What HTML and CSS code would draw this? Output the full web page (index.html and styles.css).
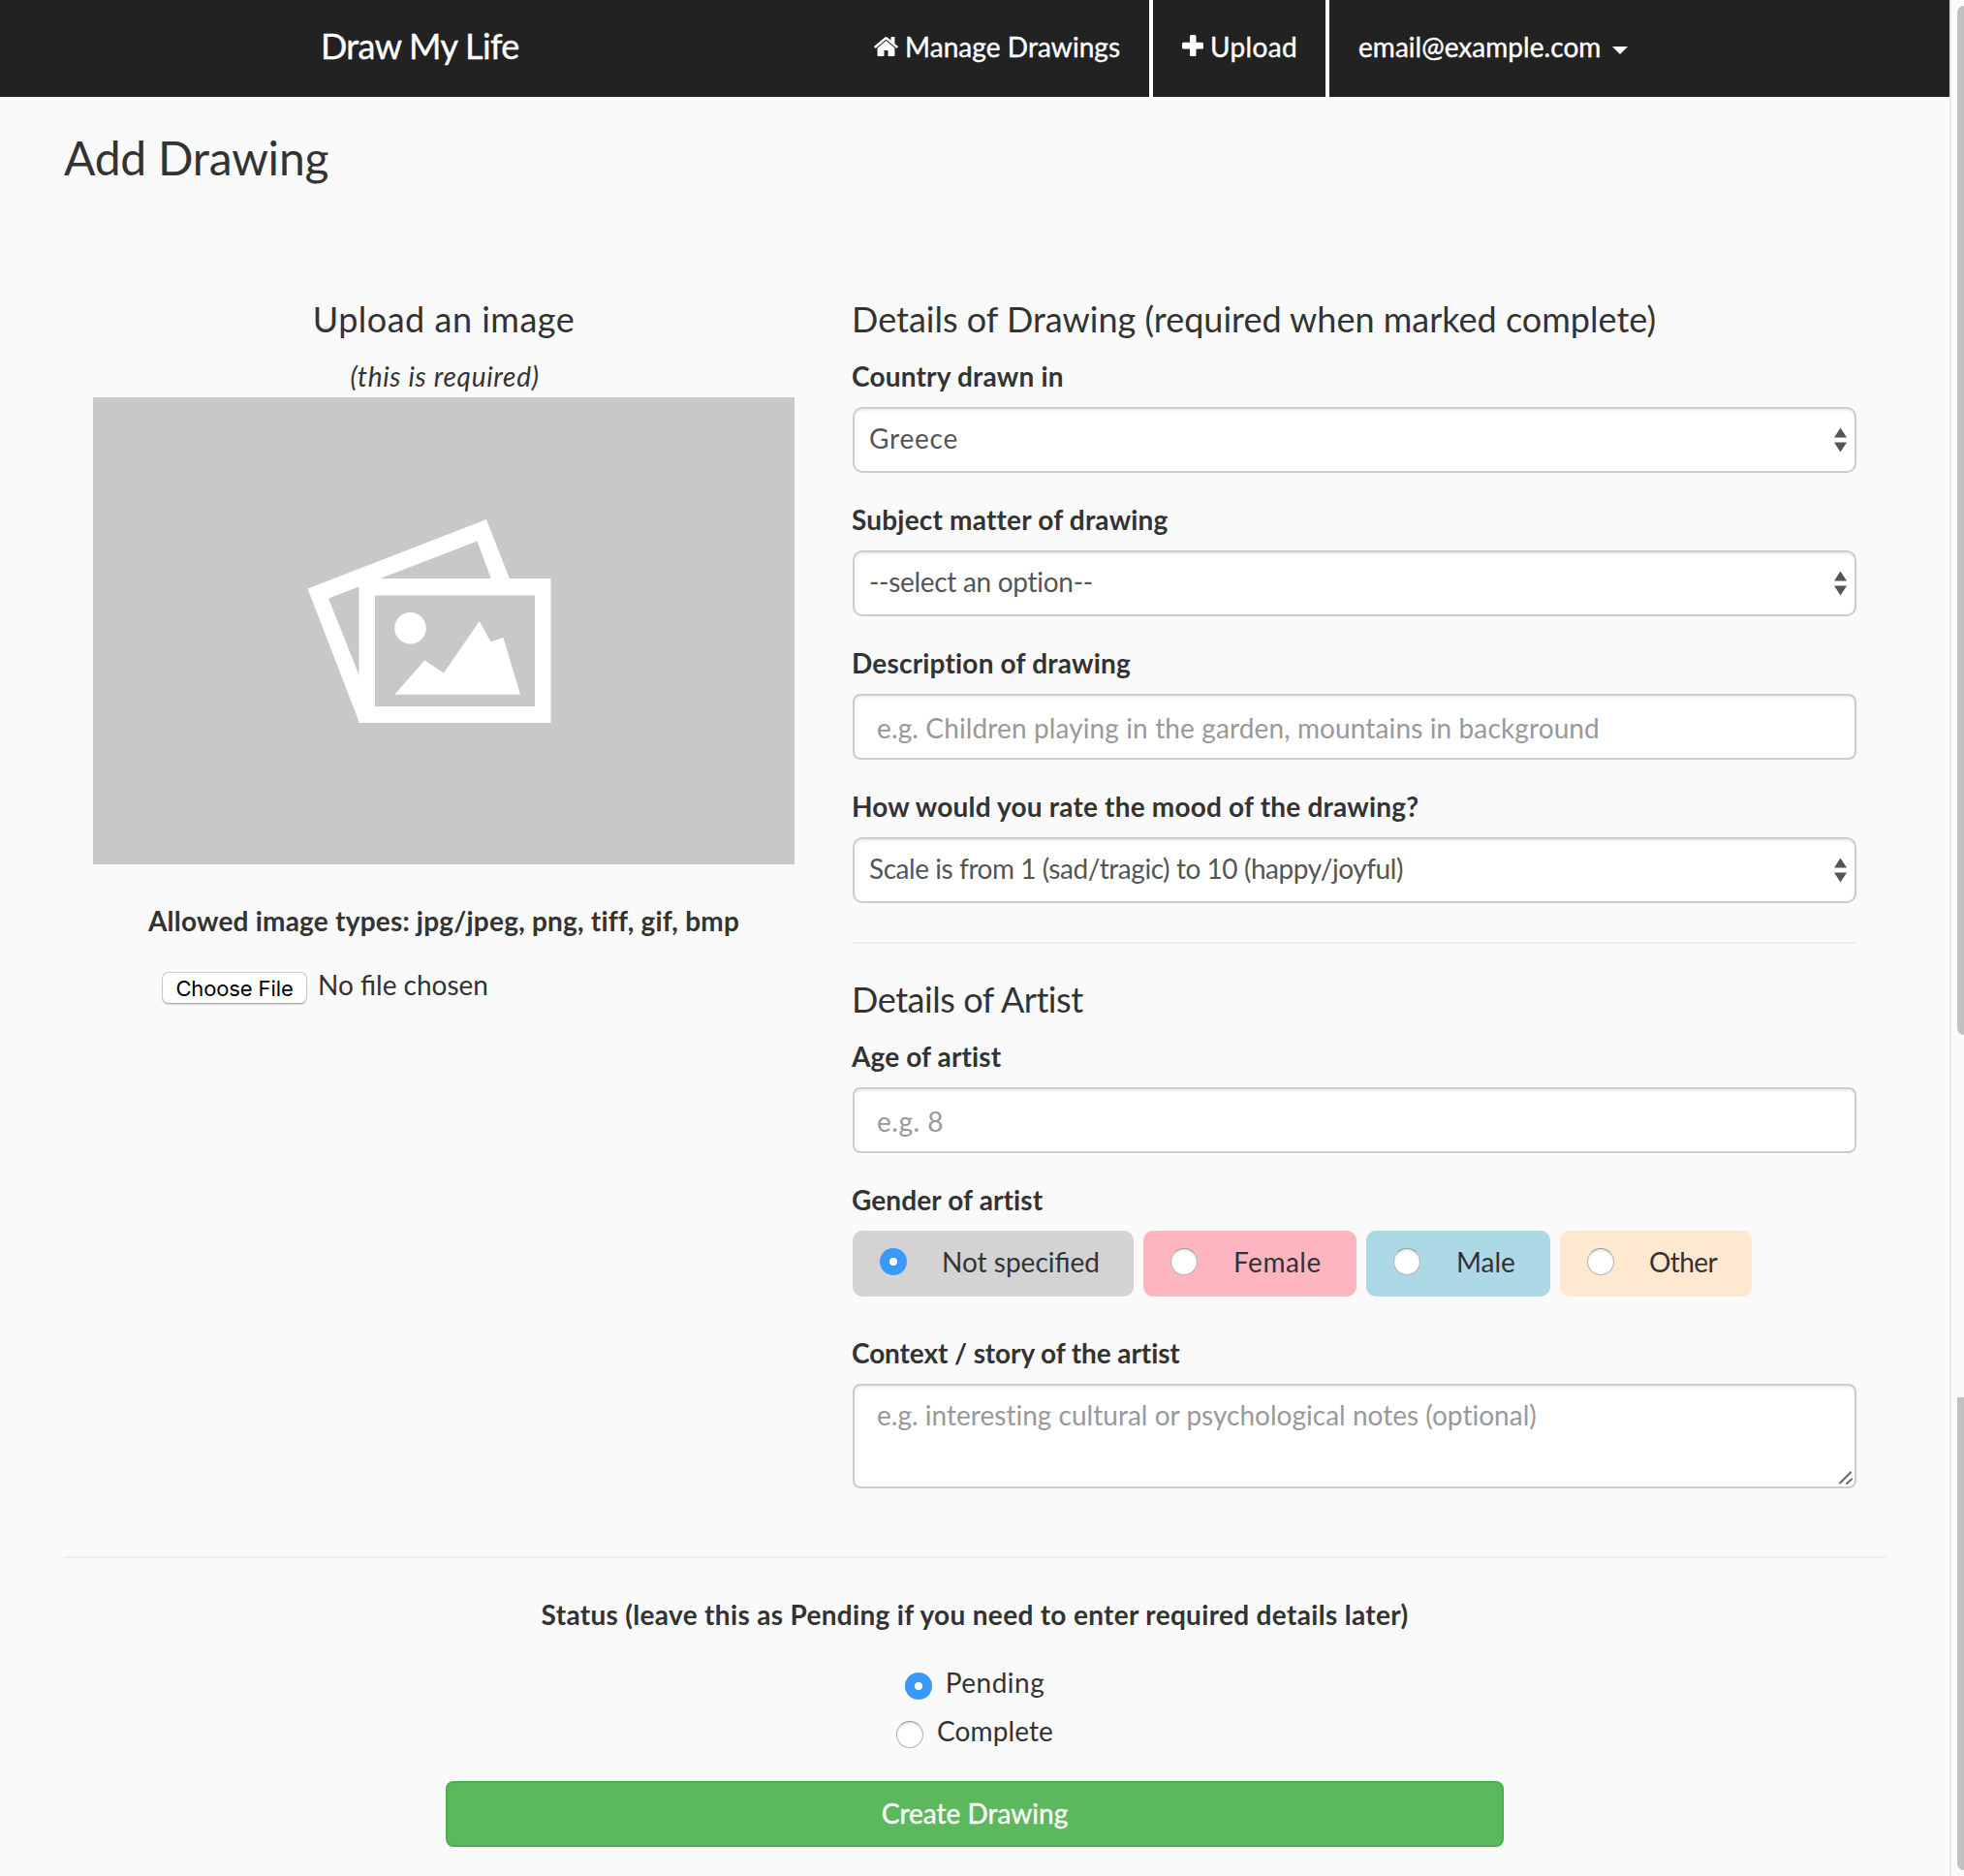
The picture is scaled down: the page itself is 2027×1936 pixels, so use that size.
FILE: index.html
```html
<!DOCTYPE html>
<html lang="en">
<head>
<meta charset="utf-8">
<title>Draw My Life</title>
<link rel="stylesheet" href="styles.css">
</head>
<body>
<div class="page">
  <nav class="navbar">
    <a class="brand">Draw My Life</a>
    <a class="nav-item nav-manage">
      <svg class="icon-home" viewBox="26 253 1612 1283" preserveAspectRatio="none"><path fill="currentColor" d="M1408 992v480q0 26-19 45t-45 19h-384v-384h-256v384h-384q-26 0-45-19t-19-45v-480q0-1 .5-3t.5-3l575-474 575 474q1 2 1 6zm223-69l-62 74q-8 9-21 11h-3q-13 0-21-7l-692-577-692 577q-12 8-24 7-13-2-21-11l-62-74q-8-10-7-23.500t11-21.500l719-599q32-26 76-26t76 26l244 204v-195q0-14 9-23t23-9h192q14 0 23 9t9 23v408l219 182q10 8 11 21.500t-7 23.500z"/></svg>
      <span>Manage Drawings</span>
    </a>
    <a class="nav-item nav-upload">
      <svg class="icon-plus" viewBox="0 0 22 22"><rect x="8" y="0" width="6.500" height="22" rx="1.500" fill="currentColor"/><rect x="0" y="7.700" width="22" height="6.800" rx="1.500" fill="currentColor"/></svg>
      <span>Upload</span>
    </a>
    <a class="nav-item nav-user"><span>email@example.com</span><i class="caret"></i></a>
  </nav>

  <form class="content">
    <h1>Add Drawing</h1>
    <div class="columns">
      <section class="upload">
        <h2 class="ls-50">Upload an image</h2>
        <p class="note">(this is required)</p>
        <svg class="preview" viewBox="96 410 724 482">
          <rect x="96" y="410" width="724" height="482" fill="#c8c8c8"/>
          <path fill="#fff" fill-rule="evenodd" d="M317.500 607.500L502 536L526 597.500H507L492.500 558.500L339 617.500L371 698V746Z"/>
          <path fill="#fff" fill-rule="evenodd" d="M370.500 597H568.500V746H370.500ZM387 614.500V729H552V614.500Z"/>
          <circle cx="423.500" cy="648.300" r="16.300" fill="#fff"/>
          <path fill="#fff" d="M407.300 716.700L438.300 681.500L458 694.500L494.800 641L506.500 662.300L519.500 658L537 716.700Z"/>
        </svg>
        <p class="types">Allowed image types: jpg/jpeg, png, tiff, gif, bmp</p>
        <div class="file">
          <button type="button" class="file-btn">Choose File</button>
          <span class="file-name">No file chosen</span>
        </div>
      </section>

      <section class="details">
        <h2>Details of Drawing (required when marked complete)</h2>
        <label>Country drawn in</label>
        <div class="control select"><span class="ls-80">Greece</span><svg class="arrows" viewBox="0 0 13 26"><path d="M0 10.500L6.500 .500L13 10.500ZM0 15.500H13L6.500 25.500Z" fill="#555"/></svg></div>
        <label>Subject matter of drawing</label>
        <div class="control select"><span class="ls-n30">--select an option--</span><svg class="arrows" viewBox="0 0 13 26"><path d="M0 10.500L6.500 .500L13 10.500ZM0 15.500H13L6.500 25.500Z" fill="#555"/></svg></div>
        <label>Description of drawing</label>
        <input class="control ls-12" type="text" placeholder="e.g. Children playing in the garden, mountains in background">
        <label>How would you rate the mood of the drawing?</label>
        <div class="control select"><span class="ls-n44">Scale is from 1 (sad/tragic) to 10 (happy/joyful)</span><svg class="arrows" viewBox="0 0 13 26"><path d="M0 10.500L6.500 .500L13 10.500ZM0 15.500H13L6.500 25.500Z" fill="#555"/></svg></div>
        <hr class="rule-inner">
        <h2 class="ls-n44">Details of Artist</h2>
        <label class="ls-12">Age of artist</label>
        <input class="control ls-50" type="text" placeholder="e.g. 8">
        <label class="ls-12">Gender of artist</label>
        <div class="genders">
          <div class="gender unspecified"><i class="radio checked"></i><span>Not specified</span></div>
          <div class="gender female"><i class="radio"></i><span class="ls-50">Female</span></div>
          <div class="gender male"><i class="radio"></i><span>Male</span></div>
          <div class="gender other"><i class="radio"></i><span class="ls-n60">Other</span></div>
        </div>
        <label class="ls-n10">Context / story of the artist</label>
        <div class="story">
          <textarea class="control ls-2" placeholder="e.g. interesting cultural or psychological notes (optional)"></textarea>
          <svg class="grip" viewBox="0 0 14 14"><path d="M1 12.500L12 1.500M8 13L13 8.500" stroke="#666" stroke-width="2" stroke-linecap="round"/></svg>
        </div>
      </section>
    </div>
    <hr class="rule">
    <p class="status">Status (leave this as Pending if you need to enter required details later)</p>
    <div class="option pending"><i class="radio checked"></i><span class="ls-50">Pending</span></div>
    <div class="option"><i class="radio"></i><span class="ls-12">Complete</span></div>
    <button type="button" class="submit">Create Drawing</button>
  </form>
</div>
<aside class="gutter"><i class="thumb thumb-top"></i><i class="thumb thumb-bottom"></i></aside>
</body>
</html>
```
FILE: styles.css
```css
* { box-sizing: border-box; }
body {
  margin: 0;
  display: flex;
  height: 1936px;
  overflow: hidden;
  background: #fafafa;
  color: #333;
  font: 28px/40px Lato, "Liberation Sans", sans-serif;
}
h1, h2, p { margin: 0; font-weight: 400; }
hr { margin: 0; border: 0; height: 2px; background: #eee; }
button, input, textarea { font: inherit; }
svg { display: block; flex: none; }

.page { width: 2012px; }

/* navigation */
.navbar {
  display: flex;
  height: 100px;
  padding-left: 331px;
  background: #222;
  color: #fff;
  -webkit-text-stroke: .4px #fff;
}
.brand { width: 541px; padding-top: 27px; font-size: 36px; line-height: 40px; letter-spacing: -.65px; }
.nav-item { display: flex; padding-top: 28px; border-right: 4px solid #fff; }
.nav-manage { width: 318px; padding-left: 30px; }
.nav-upload { width: 182px; padding-left: 30px; }
.nav-user { padding-left: 30px; border-right: 0; }
.icon-home { width: 25px; height: 20px; margin: 10px 7px 0 0; }
.icon-plus { width: 22px; height: 22px; margin: 8px 7px 0 0; }
.nav-manage span { letter-spacing: .07px; }
.nav-upload span { letter-spacing: .35px; }
.nav-user span { letter-spacing: .04px; }
.caret {
  height: 8px;
  margin: 20px 0 0 12px;
  border: 8px solid transparent;
  border-top-color: #fff;
  border-bottom: 0;
}

/* form layout */
.content { padding: 37px 66px 0; }
h1 { font-size: 48px; line-height: 52px; letter-spacing: -.24px; }
.columns { display: flex; gap: 60px; margin-top: 120px; padding: 0 30px; }
.upload { width: 724px; }
.details { width: 1036px; }
h2 { margin-bottom: 19px; font-size: 36px; line-height: 40px; }
.details h2, label { text-indent: -1px; }
label { display: block; margin: 28px 0 12px; font-weight: 700; letter-spacing: .19px; }
h2 + label { margin-top: 0; }

/* upload column */
.upload h2, .upload p { text-align: center; }
.upload .note { padding-left: 2px; font-style: italic; letter-spacing: .7px; }
.preview { width: 724px; height: 482px; margin-top: 2px; }
.upload .types { margin-top: 38px; font-weight: 700; letter-spacing: .21px; }
.file { display: flex; margin: 26px 0 0 71px; }
.file-btn {
  width: 150px;
  height: 33px;
  margin: 7px 11px 0 0;
  padding: 0;
  border: 1px solid #c8c8c8;
  border-bottom-color: #adadad;
  border-radius: 7px;
  background: #fff;
  box-shadow: 0 1px 1px rgba(0, 0, 0, .15);
  color: #000;
  font: 22px/30px Inter, sans-serif;
  letter-spacing: -.12px;
}
.file-name { letter-spacing: 0; }

/* form controls */
.control {
  display: block;
  width: 1036px;
  height: 68px;
  border: 2px solid #ccc;
  border-radius: 8px;
  background: #fff;
  box-shadow: inset 0 2px 2px rgba(0, 0, 0, .075);
  padding: 1px 23px 0;
}
.control::placeholder { color: #999; opacity: 1; }
.select {
  display: flex;
  justify-content: space-between;
  padding: 10px 8px 0 15px;
  border-radius: 10px;
  color: #555;
}
.arrows { width: 13px; height: 26px; margin-top: 9px; }
.rule-inner { margin: 40px 0 37px; }
.genders { display: flex; gap: 10px; margin-bottom: 38px; }
.gender { display: flex; height: 68px; padding: 12px 0 0 28px; border-radius: 10px; }
.gender .radio { margin: 6px 36px 0 0; }
.gender.female .radio, .gender.male .radio { margin-right: 37px; }
.unspecified { width: 290px; background: lightgrey; }
.female { width: 220px; background: lightpink; }
.male { width: 190px; background: lightblue; }
.other { width: 198px; background: #ffe8d0; }
.radio {
  flex: none;
  width: 28px;
  height: 28px;
  border: 1px solid #b4b4b4;
  border-top-color: #999;
  border-radius: 50%;
  background: #fff;
  box-shadow: inset 0 2px 2px rgba(0, 0, 0, .1);
}
.radio.checked {
  border: 0;
  background: radial-gradient(circle, #fff 3.700px, #3b99fc 4.500px);
  box-shadow: none;
}
.story { position: relative; }
.story .control { height: 108px; padding: 10px 23px; resize: none; overflow: hidden; }
.grip { position: absolute; right: 4px; bottom: 4px; width: 14px; height: 14px; }

/* status and submit */
.rule { margin: 70px 0 38px; }
.status { text-align: center; font-weight: 700; letter-spacing: .32px; }
.option { display: flex; justify-content: center; margin-top: 10px; }
.option.pending { margin-top: 30px; }
.option .radio { margin: 10px 14px 0 0; }
.submit {
  display: block;
  width: 1092px;
  height: 68px;
  margin: 32px auto 0;
  padding: 0 0 3px;
  border: 2px solid #4cae4c;
  border-radius: 8px;
  background: #5cb85c;
  color: #fff;
  -webkit-text-stroke: .4px #fff;
}

/* scroll track beside the page */
.gutter {
  width: 15px;
  padding: 6px 0 0 6px;
  border-left: 2px solid #e8e8e8;
}
.thumb { display: block; background: #c1c1c1; }
.thumb-top { height: 1062px; border-radius: 8px 0 0 8px; }
.thumb-bottom { height: 488px; margin-top: 374px; border-radius: 0 0 0 8px; }

/* tracking */
.ls-2 { letter-spacing: .02px; }
.ls-12 { letter-spacing: .12px; }
.ls-50 { letter-spacing: .5px; }
.ls-80 { letter-spacing: .8px; }
.ls-n10 { letter-spacing: -.1px; }
.ls-n30 { letter-spacing: -.3px; }
.ls-n44 { letter-spacing: -.44px; }
.ls-n60 { letter-spacing: -.6px; }
```
